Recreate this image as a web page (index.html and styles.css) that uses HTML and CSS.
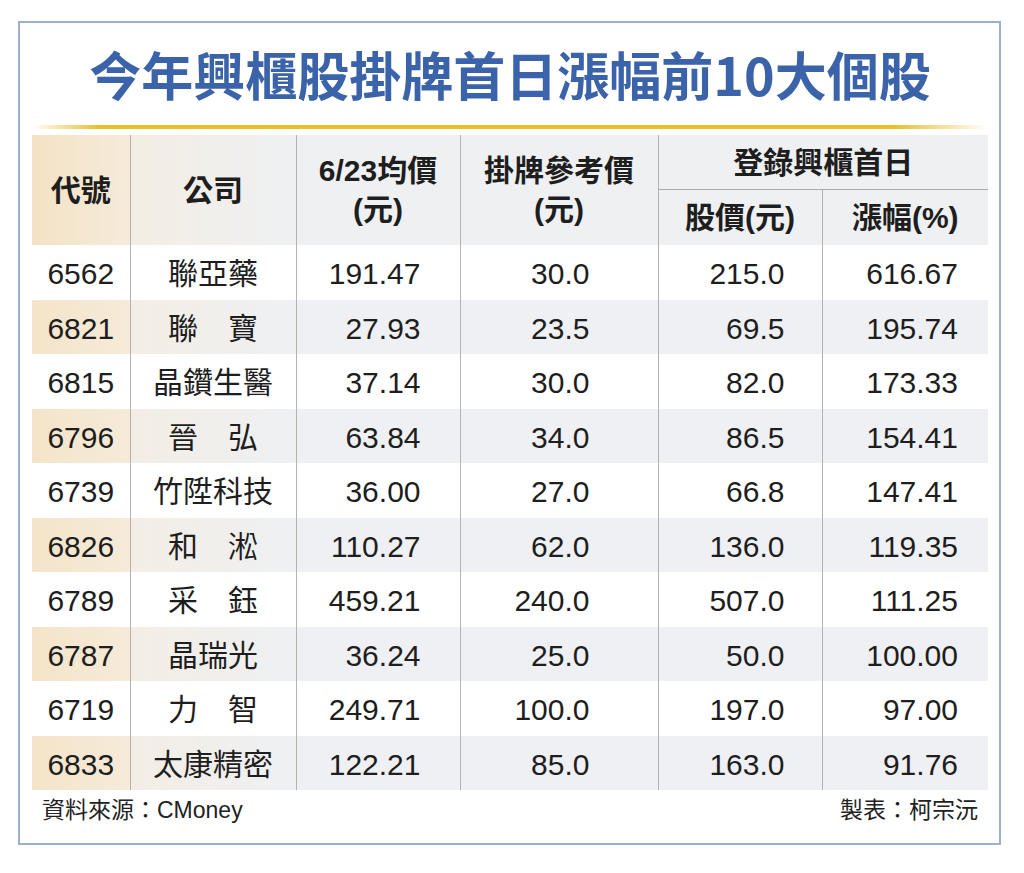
FILE: index.html
```html
<!DOCTYPE html>
<html lang="zh-Hant">
<head>
<meta charset="utf-8">
<title>今年興櫃股掛牌首日漲幅前10大個股</title>
<link rel="stylesheet" href="styles.css">
</head>
<body>
<div class="frame">
  <h1 class="title">今年興櫃股掛牌首日漲幅前10大個股</h1>
  <div class="goldline"></div>
  <table class="grid">
    <colgroup>
      <col class="w1"><col class="w2"><col class="w3"><col class="w4"><col class="w5"><col class="w6">
    </colgroup>
    <thead>
      <tr class="h1row">
        <th rowspan="2" class="c1">代號</th>
        <th rowspan="2" class="c2">公司</th>
        <th rowspan="2" class="cx">6/23均價<br>(元)</th>
        <th rowspan="2" class="cx">掛牌參考價<br>(元)</th>
        <th colspan="2" class="cx group">登錄興櫃首日</th>
      </tr>
      <tr class="h2row">
        <th class="cx">股價(元)</th>
        <th class="cx">漲幅(%)</th>
      </tr>
    </thead>
    <tbody>
      <tr><td class="c1">6562</td><td class="c2">聯亞藥</td><td class="n3">191.47</td><td class="n4">30.0</td><td class="n5">215.0</td><td class="n6">616.67</td></tr>
      <tr class="alt"><td class="c1">6821</td><td class="c2">聯　寶</td><td class="n3">27.93</td><td class="n4">23.5</td><td class="n5">69.5</td><td class="n6">195.74</td></tr>
      <tr><td class="c1">6815</td><td class="c2">晶鑽生醫</td><td class="n3">37.14</td><td class="n4">30.0</td><td class="n5">82.0</td><td class="n6">173.33</td></tr>
      <tr class="alt"><td class="c1">6796</td><td class="c2">晉　弘</td><td class="n3">63.84</td><td class="n4">34.0</td><td class="n5">86.5</td><td class="n6">154.41</td></tr>
      <tr><td class="c1">6739</td><td class="c2">竹陞科技</td><td class="n3">36.00</td><td class="n4">27.0</td><td class="n5">66.8</td><td class="n6">147.41</td></tr>
      <tr class="alt"><td class="c1">6826</td><td class="c2">和　淞</td><td class="n3">110.27</td><td class="n4">62.0</td><td class="n5">136.0</td><td class="n6">119.35</td></tr>
      <tr><td class="c1">6789</td><td class="c2">采　鈺</td><td class="n3">459.21</td><td class="n4">240.0</td><td class="n5">507.0</td><td class="n6">111.25</td></tr>
      <tr class="alt"><td class="c1">6787</td><td class="c2">晶瑞光</td><td class="n3">36.24</td><td class="n4">25.0</td><td class="n5">50.0</td><td class="n6">100.00</td></tr>
      <tr><td class="c1">6719</td><td class="c2">力　智</td><td class="n3">249.71</td><td class="n4">100.0</td><td class="n5">197.0</td><td class="n6">97.00</td></tr>
      <tr class="alt"><td class="c1">6833</td><td class="c2">太康精密</td><td class="n3">122.21</td><td class="n4">85.0</td><td class="n5">163.0</td><td class="n6">91.76</td></tr>
    </tbody>
  </table>
  <div class="footer">
    <span class="src">資料來源：CMoney</span>
    <span class="maker">製表：柯宗沅</span>
  </div>
</div>
</body>
</html>
```
FILE: styles.css
```css
html, body {
  margin: 0;
  padding: 0;
  background: #ffffff;
}

body {
  font-family: "Liberation Sans", "Noto Sans CJK TC", sans-serif;
  color: #1e1e1e;
}

.frame {
  box-sizing: border-box;
  width: 983px;
  height: 824px;
  margin: 21px 0 0 18px;
  border: 2px solid #9db1cd;
  padding: 0 11px 0 12px;
  background: #ffffff;
}

.title {
  margin: 25px 0 0 0;
  font-family: "Noto Sans CJK TC", sans-serif;
  font-size: 52px;
  line-height: 52px;
  font-weight: 700;
  color: #3b63a9;
  text-align: center;
  letter-spacing: 0;
}

.goldline {
  height: 4px;
  margin-top: 25px;
  background: linear-gradient(to right,
    rgba(236, 196, 46, 0) 0%,
    #e7bf2c 7%,
    #e7bf2c 90%,
    rgba(236, 196, 46, 0) 100%);
}

.grid {
  margin-top: 6px;
  width: 956px;
  border-collapse: collapse;
  table-layout: fixed;
  border-spacing: 0;
}

.w1 { width: 98px; }
.w2 { width: 166px; }
.w3 { width: 164px; }
.w4 { width: 198px; }
.w5 { width: 164px; }
.w6 { width: 166px; }

.grid th,
.grid td {
  padding: 0;
  font-size: 30px;
  border-left: 1px solid #b3b3b3;
  white-space: nowrap;
}

.grid th:first-child,
.grid td:first-child {
  border-left: none;
}

.grid th {
  font-family: "Liberation Sans", "Noto Sans CJK TC", sans-serif;
  font-weight: 700;
  color: #1e1e1e;
  text-align: center;
  vertical-align: middle;
  line-height: 39px;
  background: #eef0f2;
}

.h1row { height: 54px; }
.h2row { height: 56px; }

.grid th.c1 {
  background: linear-gradient(to right, #f3e2c5, #f6ebda);
}

.grid th.c2 {
  background: linear-gradient(to right, #f3ede3, #eef0f2);
}

.grid th.group {
  border-bottom: 1px solid #a9a9a9;
  padding-top: 2px;
}

.h2row th.cx:first-child {
  border-left: 1px solid #b3b3b3;
}

.grid tbody tr {
  height: 54.5px;
}

.grid td {
  vertical-align: middle;
  line-height: 34px;
  padding-top: 4px;
}

.grid tr.alt td {
  background: #eef0f3;
}

.grid tr.alt td.c1 {
  background: linear-gradient(to right, #f4e4c9, #f6ebd9);
}

.grid tr.alt td.c2 {
  background: linear-gradient(to right, #f3ede4, #eef0f3);
}

.grid td.c1,
.grid td.c2 {
  text-align: center;
}

.grid td.n3,
.grid td.n4,
.grid td.n5,
.grid td.n6 {
  text-align: right;
}

.grid td.n3 { padding-right: 39px; }
.grid td.n4 { padding-right: 68px; }
.grid td.n5 { padding-right: 37px; }
.grid td.n6 { padding-right: 30px; }

.footer {
  display: flex;
  justify-content: space-between;
  align-items: center;
  margin-top: 6px;
  padding: 0 10px;
  font-size: 23px;
  line-height: 28px;
  color: #222222;
}
```
